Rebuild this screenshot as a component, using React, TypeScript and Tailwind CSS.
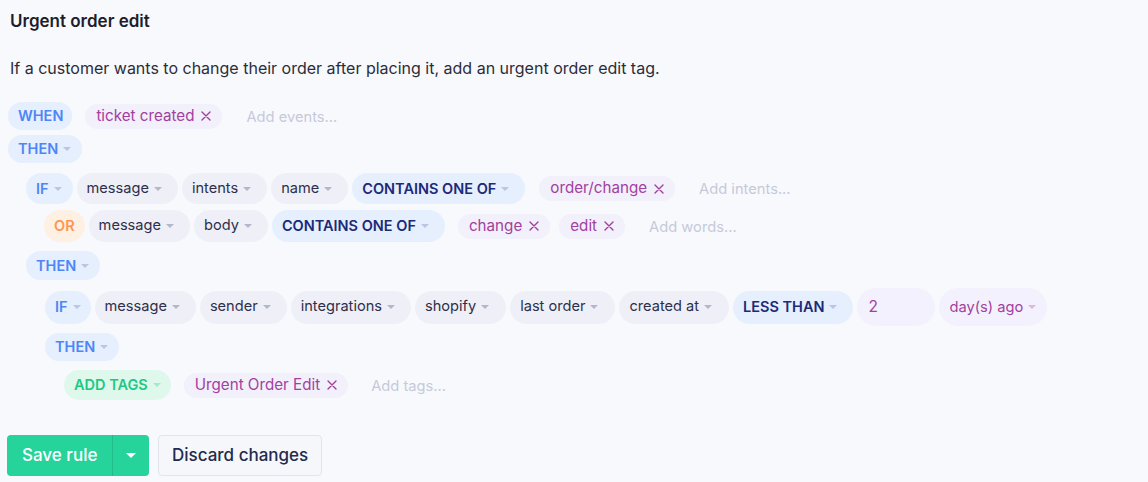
import React from 'react';

type Tone = 'gray' | 'blue' | 'navy' | 'orange' | 'green' | 'purple';

const toneClass: Record<Tone, string> = {
  gray: 'bg-[#efeff8] text-[#2d2f4a] text-[14.6px]',
  blue: 'bg-[#e5effd] text-[#4f86f7] font-semibold text-[14.5px]',
  navy: 'bg-[#e5effd] text-[#1c2a78] font-semibold text-[14.5px]',
  orange: 'bg-[#fff0e4] text-[#ff9650] font-semibold text-[14.5px]',
  green: 'bg-[#dff8ec] text-[#22c882] font-semibold text-[14.5px]',
  purple: 'bg-[#f3f1fd] text-[#a3409f] text-[14.7px]',
};

const caretClass: Record<Tone, string> = {
  gray: 'border-t-[#b4b7c9]',
  blue: 'border-t-[#b9c6e4]',
  navy: 'border-t-[#b9c6e4]',
  orange: 'border-t-[#f5c4a0]',
  green: 'border-t-[#a6e8c9]',
  purple: 'border-t-[#e0b6df]',
};

const Caret = ({ tone }: { tone: Tone }) => (
  <span className={`ml-[5px] inline-block w-0 h-0 border-l-[4px] border-r-[4px] border-t-[4px] border-l-transparent border-r-transparent ${caretClass[tone]}`} />
);

const Pill = ({ label, tone = 'gray', caret = true, className = 'pl-[10px] pr-[16px]' }: { label: string; tone?: Tone; caret?: boolean; className?: string }) => (
  <div className={`flex items-center h-full rounded-full whitespace-nowrap ${toneClass[tone]} ${className}`}>
    {label}
    {caret && <Caret tone={tone} />}
  </div>
);

const Chip = ({ label }: { label: string }) => (
  <div className="flex items-center h-[25px] px-[11px] rounded-full bg-[#f1f0fb] text-[#a3409f] text-[15.2px] whitespace-nowrap">
    {label}
    <svg className="ml-[7px]" width="10" height="10" viewBox="0 0 10 10" fill="none" stroke="currentColor" strokeWidth="1.4" strokeLinecap="round">
      <path d="M1 1L9 9M9 1L1 9" />
    </svg>
  </div>
);

const Placeholder = ({ label }: { label: string }) => (
  <span className="text-[14.7px] text-[#c6c9da] whitespace-nowrap">{label}</span>
);

export default function App() {
  return (
    <div className="w-[1148px] h-[482px] bg-[#f8f9fd] text-[#222] overflow-hidden" style={{ fontFamily: 'Inter, "Noto Sans", sans-serif' }}>
      <div className="pt-[9px] pl-[10px]">
        <h2 className="text-[17px] font-semibold text-[#1d1e2c] leading-[24px]">Urgent order edit</h2>
        <p className="mt-[23px] text-[16px] text-[#2b2d3a] leading-[24px]">
          If a customer wants to change their order after placing it, add an urgent order edit tag.
        </p>
      </div>

      <div className="pl-[8px] mt-[22px] flex flex-col">
        <div className="flex items-center h-[28px]">
          <Pill label="WHEN" tone="blue" caret={false} className="pl-[10px] pr-[9px]" />
          <div className="ml-[13px]"><Chip label="ticket created" /></div>
          <div className="ml-[24px]"><Placeholder label="Add events..." /></div>
        </div>

        <div className="flex items-center h-[28px] mt-[5px]">
          <Pill label="THEN" tone="blue" className="pl-[10px] pr-[11px]" />
        </div>

        <div className="flex items-center h-[31px] gap-[4px] mt-[10px] ml-[18px]">
          <Pill label="IF" tone="blue" className="pl-[10px] pr-[11px]" />
          <Pill label="message" />
          <Pill label="intents" />
          <Pill label="name" />
          <Pill label="CONTAINS ONE OF" tone="navy" className="pl-[10px] pr-[16px]" />
          <div className="ml-[10px]"><Chip label="order/change" /></div>
          <div className="ml-[20px]"><Placeholder label="Add intents..." /></div>
        </div>

        <div className="flex items-center h-[32px] gap-[4px] mt-[6px] ml-[36px]">
          <Pill label="OR" tone="orange" caret={false} className="px-[10px]" />
          <Pill label="message" />
          <Pill label="body" />
          <Pill label="CONTAINS ONE OF" tone="navy" className="pl-[10px] pr-[16px]" />
          <div className="ml-[9px]"><Chip label="change" /></div>
          <div className="ml-[5px]"><Chip label="edit" /></div>
          <div className="ml-[20px]"><Placeholder label="Add words..." /></div>
        </div>

        <div className="flex items-center h-[29px] mt-[9px] ml-[18px]">
          <Pill label="THEN" tone="blue" className="pl-[10px] pr-[11px]" />
        </div>

        <div className="flex items-center h-[38px] gap-[4px] mt-[8px] ml-[37px]">
          <div className="flex items-center h-[33px] gap-[4px]">
            <Pill label="IF" tone="blue" className="pl-[10px] pr-[10px]" />
            <Pill label="message" />
            <Pill label="sender" />
            <Pill label="integrations" />
            <Pill label="shopify" className="pl-[10px] pr-[17px]" />
            <Pill label="last order" className="pl-[10px] pr-[17px]" />
            <Pill label="created at" className="pl-[10px] pr-[17px]" />
            <Pill label="LESS THAN" tone="navy" className="pl-[10px] pr-[16px]" />
          </div>
          <div className="flex items-center h-[38px] w-[78px] pl-[11px] rounded-full bg-[#f3f1fd] text-[#a3409f] text-[15.5px]">2</div>
          <div className="flex items-center h-[38px]">
            <Pill label="day(s) ago" tone="purple" className="pl-[10px] pr-[11px]" />
          </div>
        </div>

        <div className="flex items-center h-[28px] mt-[7px] ml-[37px]">
          <Pill label="THEN" tone="blue" className="pl-[10px] pr-[11px]" />
        </div>

        <div className="flex items-center h-[30px] mt-[9px] ml-[56px]">
          <Pill label="ADD TAGS" tone="green" className="pl-[10px] pr-[10px]" />
          <div className="ml-[13px]"><Chip label="Urgent Order Edit" /></div>
          <div className="ml-[23px]"><Placeholder label="Add tags..." /></div>
        </div>
      </div>

      <div className="flex items-center gap-[9px] pl-[7px] mt-[35px]">
        <div className="flex h-[41px] rounded-[4px] bg-[#26d39b] text-white text-[17px] font-medium overflow-hidden">
          <div className="flex items-center w-[105px] pl-[15px]">Save rule</div>
          <div className="flex items-center justify-center w-[37px] border-l border-[#20bd8a]">
            <span className="inline-block w-0 h-0 border-l-[5px] border-r-[5px] border-t-[5px] border-l-transparent border-r-transparent border-t-white" />
          </div>
        </div>
        <div className="flex items-center h-[41px] px-[13px] rounded-[4px] bg-[#f6f7fb] border border-[#e3e5ee] text-[#232a4d] text-[17px] font-medium">
          Discard changes
        </div>
      </div>
    </div>
  );
}
